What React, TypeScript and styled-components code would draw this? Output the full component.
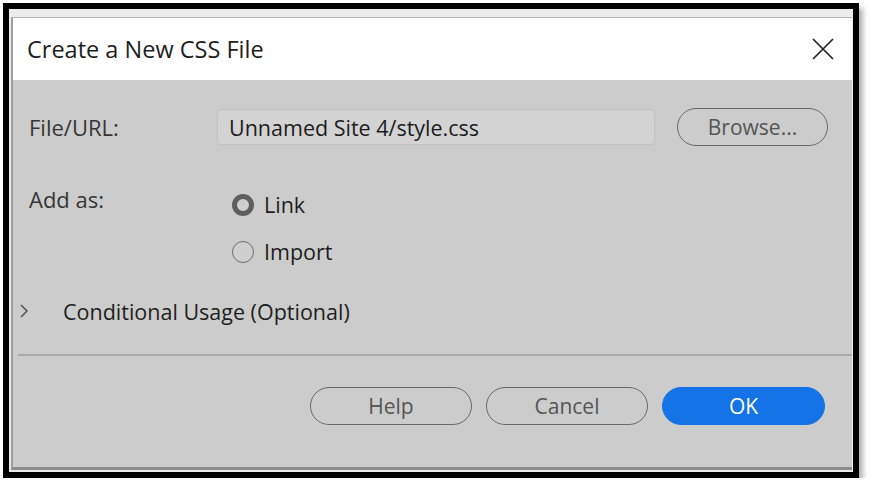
import React from "react";
import styled, { createGlobalStyle } from "styled-components";

const Global = createGlobalStyle`
  html, body { margin: 0; padding: 0; background: #ffffff; }
  body { font-family: "Open Sans", "Noto Sans", "DejaVu Sans", sans-serif; }
  * { box-sizing: border-box; }
`;

const Frame = styled.div`
  margin: 3px 0 0 3px;
  width: 856px;
  height: 475px;
  border: 6px solid #000;
  box-shadow: 4px 5px 5px rgba(0, 0, 0, 0.3);
  display: flex;
`;

const Chrome = styled.div`
  flex: 1;
  display: flex;
  background: #ececec;
  padding: 8px 1px 2px 2px;
`;

const Dialog = styled.div`
  flex: 1;
  display: flex;
  flex-direction: column;
  background: #cccccc;
  border-top: 1px solid #b4b4b4;
  border-left: 2px solid #9e9e9e;
  border-bottom: 3px solid #8e8e8e;
`;

const TitleBar = styled.div`
  height: 62px;
  background: #ffffff;
  display: flex;
  align-items: center;
  justify-content: space-between;
  padding: 0 17px 0 14px;
`;

const Title = styled.div`
  font-size: 23.5px;
  line-height: 30px;
  color: #1e1e1e;
`;

const CloseButton = styled.button`
  border: none;
  background: none;
  padding: 0;
  width: 24px;
  height: 24px;
  display: flex;
  align-items: center;
  justify-content: center;
`;

const Body = styled.div`
  flex: 1;
  display: flex;
  flex-direction: column;
  padding-top: 28px;
`;

const FieldRow = styled.div`
  display: flex;
  align-items: center;
  padding-left: 16px;
`;

const Label = styled.div<{ $top?: boolean }>`
  width: 188px;
  font-size: 22px;
  line-height: 28px;
  color: #363636;
  align-self: ${(p) => (p.$top ? "flex-start" : "center")};
`;

const PathInput = styled.div`
  width: 438px;
  height: 36px;
  border: 1px solid #c2c2c2;
  border-radius: 4px;
  background: #d3d3d3;
  display: flex;
  align-items: center;
  padding-left: 11px;
  font-size: 21.5px;
  color: #1c1c1c;
`;

const Pill = styled.button<{ $primary?: boolean; $w: number }>`
  width: ${(p) => p.$w}px;
  height: 38px;
  border-radius: 19px;
  font-family: inherit;
  font-size: 21px;
  display: flex;
  align-items: center;
  justify-content: center;
  padding: 0;
  color: ${(p) => (p.$primary ? "#ffffff" : "#555555")};
  background: ${(p) => (p.$primary ? "#1473e6" : "transparent")};
  border: ${(p) => (p.$primary ? "1.5px solid #1473e6" : "1.5px solid #6a6a6a")};
`;

const BrowseWrap = styled.div`
  margin-left: 22px;
`;

const AddRow = styled.div`
  display: flex;
  padding-left: 16px;
  margin-top: 39px;
`;

const RadioGroup = styled.div`
  display: flex;
  flex-direction: column;
  gap: 24px;
  margin-left: 15px;
  margin-top: 8px;
`;

const RadioItem = styled.label`
  display: flex;
  align-items: center;
  gap: 10px;
  height: 23px;
  font-size: 21.5px;
  color: #1e1e1e;
`;

const RadioDot = styled.span<{ $on?: boolean }>`
  width: 22px;
  height: 22px;
  border-radius: 50%;
  border: ${(p) => (p.$on ? "5px solid #5e5e5e" : "1.5px solid #6e6e6e")};
  background: #cfcfcf;
`;

const Disclosure = styled.div`
  display: flex;
  align-items: center;
  margin-top: 33px;
  padding-left: 6px;
  height: 30px;
`;

const DisclosureText = styled.div`
  margin-left: 34px;
  font-size: 21.5px;
  color: #1e1e1e;
`;

const Separator = styled.div`
  margin: 28px 0 0 5px;
  height: 2px;
  background: #aaaaaa;
`;

const ButtonRow = styled.div`
  display: flex;
  justify-content: flex-end;
  gap: 14px;
  padding-right: 27px;
  margin-top: 31px;
`;

export default function App() {
  return (
    <>
      <Global />
      <Frame>
        <Chrome>
          <Dialog>
            <TitleBar>
              <Title>Create a New CSS File</Title>
              <CloseButton aria-label="Close">
                <svg width="22" height="22" viewBox="0 0 22 22">
                  <path d="M1 1 L21 21 M21 1 L1 21" stroke="#222" strokeWidth="1.7" fill="none" />
                </svg>
              </CloseButton>
            </TitleBar>
            <Body>
              <FieldRow>
                <Label>File/URL:</Label>
                <PathInput>Unnamed Site 4/style.css</PathInput>
                <BrowseWrap>
                  <Pill $w={151}>Browse...</Pill>
                </BrowseWrap>
              </FieldRow>
              <AddRow>
                <Label $top>Add as:</Label>
                <RadioGroup>
                  <RadioItem>
                    <RadioDot $on />
                    Link
                  </RadioItem>
                  <RadioItem>
                    <RadioDot />
                    Import
                  </RadioItem>
                </RadioGroup>
              </AddRow>
              <Disclosure>
                <svg width="10" height="16" viewBox="0 0 10 16">
                  <path d="M2 2 L8 8 L2 14" stroke="#555" strokeWidth="1.5" fill="none" />
                </svg>
                <DisclosureText>Conditional Usage (Optional)</DisclosureText>
              </Disclosure>
              <Separator />
              <ButtonRow>
                <Pill $w={162}>Help</Pill>
                <Pill $w={162}>Cancel</Pill>
                <Pill $w={163} $primary>OK</Pill>
              </ButtonRow>
            </Body>
          </Dialog>
        </Chrome>
      </Frame>
    </>
  );
}
